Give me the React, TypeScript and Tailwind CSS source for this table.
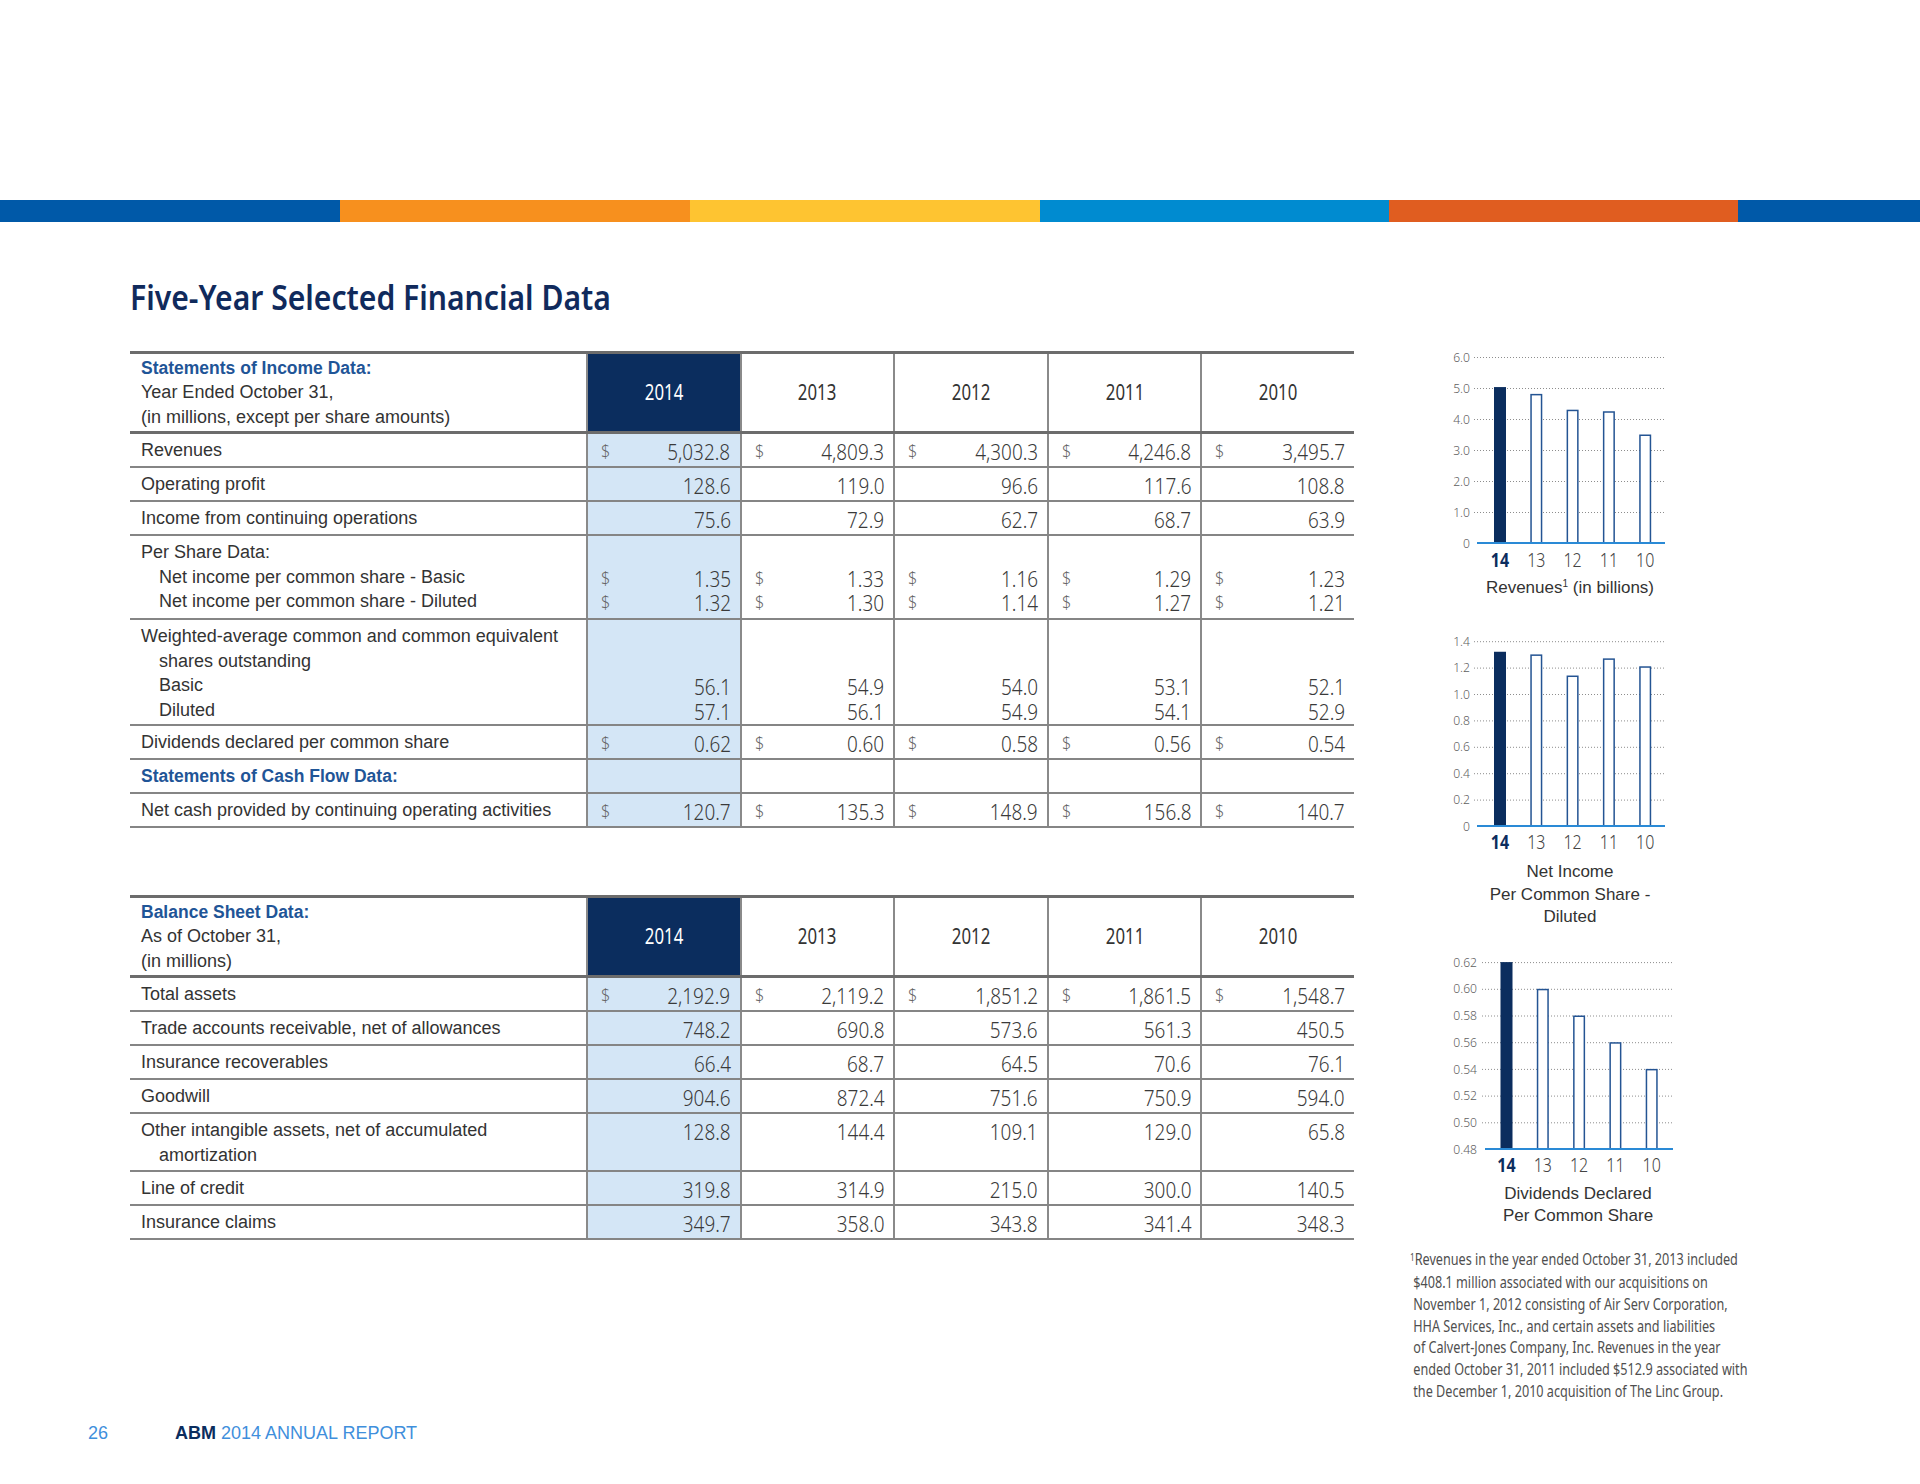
import React from "react";

const NOTO = "font-['Noto_Sans',sans-serif]";
const SANS = "font-['Liberation_Sans',Arial,sans-serif]";

type Cell = string | null;
type Line = { text: string; indent?: boolean; blue?: boolean; vals?: Cell[]; dollar?: boolean };
type Row = { h: string; lines: Line[] };

const YEARS = ["2014", "2013", "2012", "2011", "2010"];
const NBSP = "\u00a0";

const incomeRows: Row[] = [
  { h: "h-[34px]", lines: [{ text: "Revenues", dollar: true, vals: ["5,032.8", "4,809.3", "4,300.3", "4,246.8", "3,495.7"] }] },
  { h: "h-[34px]", lines: [{ text: "Operating profit", vals: ["128.6", "119.0", "96.6", "117.6", "108.8"] }] },
  { h: "h-[34px]", lines: [{ text: "Income from continuing operations", vals: ["75.6", "72.9", "62.7", "68.7", "63.9"] }] },
  {
    h: "h-[84px]",
    lines: [
      { text: "Per Share Data:" },
      { text: "Net income per common share - Basic", indent: true, dollar: true, vals: ["1.35", "1.33", "1.16", "1.29", "1.23"] },
      { text: "Net income per common share - Diluted", indent: true, dollar: true, vals: ["1.32", "1.30", "1.14", "1.27", "1.21"] },
    ],
  },
  {
    h: "h-[106px]",
    lines: [
      { text: "Weighted-average common and common equivalent" },
      { text: "shares outstanding", indent: true },
      { text: "Basic", indent: true, vals: ["56.1", "54.9", "54.0", "53.1", "52.1"] },
      { text: "Diluted", indent: true, vals: ["57.1", "56.1", "54.9", "54.1", "52.9"] },
    ],
  },
  { h: "h-[34px]", lines: [{ text: "Dividends declared per common share", dollar: true, vals: ["0.62", "0.60", "0.58", "0.56", "0.54"] }] },
  { h: "h-[34px]", lines: [{ text: "Statements of Cash Flow Data:", blue: true }] },
  { h: "h-[34px]", lines: [{ text: "Net cash provided by continuing operating activities", dollar: true, vals: ["120.7", "135.3", "148.9", "156.8", "140.7"] }] },
];

const balanceRows: Row[] = [
  { h: "h-[34px]", lines: [{ text: "Total assets", dollar: true, vals: ["2,192.9", "2,119.2", "1,851.2", "1,861.5", "1,548.7"] }] },
  { h: "h-[34px]", lines: [{ text: "Trade accounts receivable, net of allowances", vals: ["748.2", "690.8", "573.6", "561.3", "450.5"] }] },
  { h: "h-[34px]", lines: [{ text: "Insurance recoverables", vals: ["66.4", "68.7", "64.5", "70.6", "76.1"] }] },
  { h: "h-[34px]", lines: [{ text: "Goodwill", vals: ["904.6", "872.4", "751.6", "750.9", "594.0"] }] },
  {
    h: "h-[58px]",
    lines: [
      { text: "Other intangible assets, net of accumulated", vals: ["128.8", "144.4", "109.1", "129.0", "65.8"] },
      { text: "amortization", indent: true },
    ],
  },
  { h: "h-[34px]", lines: [{ text: "Line of credit", vals: ["319.8", "314.9", "215.0", "300.0", "140.5"] }] },
  { h: "h-[34px]", lines: [{ text: "Insurance claims", vals: ["349.7", "358.0", "343.8", "341.4", "348.3"] }] },
];

function HeaderRow({ lines }: { lines: string[] }) {
  return (
    <div className="grid h-[83px] grid-cols-[456px_repeat(5,minmax(0,1fr))] border-t-[3px] border-b-[3px] border-[#6c6c6c]">
      <div className="flex flex-col justify-center pl-[11px]">
        {lines.map((t, k) => (
          <div
            key={k}
            className={
              k === 0
                ? "h-[24.5px] whitespace-nowrap text-[17.5px] font-bold leading-[24.5px] text-[#1f5597]"
                : "h-[24.5px] whitespace-nowrap text-[18px] leading-[24.5px] text-[#333333]"
            }
          >
            {t}
          </div>
        ))}
      </div>
      {YEARS.map((y, i) => (
        <div
          key={y}
          className={
            i === 0
              ? `flex items-center justify-center border-l-2 border-[#8a8a8a] bg-[#0b2d5e] text-[21px] leading-none text-white ${NOTO}`
              : `flex items-center justify-center border-l-2 border-[#8a8a8a] text-[21px] leading-none text-[#333333] ${NOTO}`
          }
        >
          <span className="inline-block scale-x-[0.8]">{y}</span>
        </div>
      ))}
    </div>
  );
}

function TableRow({ row }: { row: Row }) {
  const hasDollar = row.lines.some((l) => l.dollar && l.vals);
  const hasVals = row.lines.some((l) => l.vals);
  return (
    <div className={`grid grid-cols-[456px_repeat(5,minmax(0,1fr))] border-b-2 border-[#858585] ${row.h}`}>
      <div className="pl-[11px] pt-[4px]">
        {row.lines.map((l, k) => (
          <div
            key={k}
            className={`h-[24.5px] whitespace-nowrap leading-[24.5px] ${l.indent ? "pl-[18px]" : ""} ${
              l.blue ? "text-[17.5px] font-bold text-[#1f5597]" : "text-[18px] text-[#333333]"
            }`}
          >
            {l.text}
          </div>
        ))}
      </div>
      {YEARS.map((y, i) => (
        <div
          key={y}
          className={`flex items-start justify-between border-l-2 border-[#8a8a8a] pl-[13px] pr-[9px] pt-[5px] ${NOTO} ${
            i === 0 ? "bg-[#d4e6f6]" : ""
          }`}
        >
          <div className="origin-left scale-x-[0.85] whitespace-pre text-[19px] font-light leading-[24.5px] text-[#666666]">
            {hasDollar ? row.lines.map((l) => (l.dollar && l.vals ? "$" : NBSP)).join("\n") : ""}
          </div>
          <div className="origin-right scale-x-[0.86] whitespace-pre text-right text-[22px] font-light leading-[24.5px] text-[#3a3a3a]">
            {hasVals ? row.lines.map((l) => (l.vals ? l.vals[i] ?? NBSP : NBSP)).join("\n") : ""}
          </div>
        </div>
      ))}
    </div>
  );
}

type ChartProps = {
  ticks: { v: number; label: string }[];
  yOf: (v: number) => number;
  labelX: number;
  gridX1: number;
  gridX2: number;
  baseX1: number;
  baseX2: number;
  barX0: number;
  values: number[];
  xLabelY: number;
};

function BarChart({ ticks, yOf, labelX, gridX1, gridX2, baseX1, baseX2, barX0, values, xLabelY }: ChartProps) {
  const base = yOf(ticks[0].v);
  const names = ["14", "13", "12", "11", "10"];
  return (
    <svg width="310" height="230" viewBox="0 0 310 230" className={`block ${NOTO}`}>
      {ticks.map((t, k) => (
        <g key={k}>
          <text
            transform={`translate(${labelX} ${yOf(t.v) + 4.6}) scale(0.9 1)`}
            textAnchor="end"
            fontSize="13.5"
            fontWeight={300}
            fill="#5e5e5e"
          >
            {t.label}
          </text>
          {k > 0 && (
            <line
              x1={gridX1}
              x2={gridX2}
              y1={yOf(t.v) + 0.5}
              y2={yOf(t.v) + 0.5}
              stroke="#8d8d8d"
              strokeWidth="1"
              strokeDasharray="1 2"
            />
          )}
        </g>
      ))}
      {values.map((v, i) => {
        const cx = barX0 + i * 36.3;
        const top = yOf(v);
        return i === 0 ? (
          <rect key={i} x={cx - 6} y={top} width="12" height={base - top} fill="#0b2d5e" />
        ) : (
          <rect
            key={i}
            x={cx - 5.25}
            y={top + 0.75}
            width="10.5"
            height={base - top - 0.75}
            fill="#ffffff"
            stroke="#245493"
            strokeWidth="1.5"
          />
        );
      })}
      <line x1={baseX1} x2={baseX2} y1={base} y2={base} stroke="#2a8ad6" strokeWidth="2" />
      {names.map((n, i) => (
        <text
          key={n}
          transform={`translate(${barX0 + i * 36.3} ${xLabelY + 7}) scale(0.8 1)`}
          textAnchor="middle"
          fontSize="20"
          fontWeight={i === 0 ? 700 : 300}
          fill={i === 0 ? "#0b2d5e" : "#444444"}
        >
          {n}
        </text>
      ))}
    </svg>
  );
}

export default function App() {
  const revTicks = [0, 1, 2, 3, 4, 5, 6].map((v) => ({ v, label: v === 0 ? "0" : v.toFixed(1) }));
  const niTicks = [0, 0.2, 0.4, 0.6, 0.8, 1.0, 1.2, 1.4].map((v) => ({ v, label: v === 0 ? "0" : v.toFixed(1) }));
  const divTicks = [0.48, 0.5, 0.52, 0.54, 0.56, 0.58, 0.6, 0.62].map((v) => ({ v, label: v.toFixed(2) }));

  return (
    <div className={`h-[1484px] w-[1920px] overflow-hidden bg-white ${SANS}`}>
      <div className="h-[200px]" />
      <div className="flex h-[22px]">
        <div className="w-[340px] bg-[#0059a8]" />
        <div className="w-[350px] bg-[#f7901e]" />
        <div className="w-[350px] bg-[#fec431]" />
        <div className="w-[349px] bg-[#008bd0]" />
        <div className="w-[349px] bg-[#e05d20]" />
        <div className="flex-1 bg-[#0059a8]" />
      </div>

      <div className="flex h-[1199px]">
        <div className="ml-[130px] w-[1224px] pt-[55px]">
          <h1
            className={`h-[40px] origin-left scale-x-[0.86] whitespace-nowrap text-[35px] font-semibold leading-[40px] text-[#102a5c] ${NOTO}`}
          >
            Five-Year Selected Financial Data
          </h1>

          <div className="mt-[34px]">
            <HeaderRow lines={["Statements of Income Data:", "Year Ended October 31,", "(in millions, except per share amounts)"]} />
            {incomeRows.map((r, k) => (
              <TableRow key={k} row={r} />
            ))}
          </div>

          <div className="mt-[67px]">
            <HeaderRow lines={["Balance Sheet Data:", "As of October 31,", "(in millions)"]} />
            {balanceRows.map((r, k) => (
              <TableRow key={k} row={r} />
            ))}
          </div>
        </div>

        <div className="ml-[56px] w-[310px] pt-[123px]">
          <BarChart
            ticks={revTicks}
            yOf={(v) => 198 - v * 31}
            labelX={60}
            gridX1={64}
            gridX2={256}
            baseX1={67}
            baseX2={255}
            barX0={90}
            values={[5.03, 4.81, 4.3, 4.25, 3.5]}
            xLabelY={215}
          />
          <div className="mt-[2px] w-[320px] text-center text-[17px] leading-[22px] text-[#333333]">
            Revenues<span className="relative -top-[6px] text-[10px]">1</span> (in billions)
          </div>

          <div className="mt-[26px]">
            <BarChart
              ticks={niTicks}
              yOf={(v) => 199 - v * 132}
              labelX={60}
              gridX1={64}
              gridX2={256}
              baseX1={67}
              baseX2={255}
              barX0={90}
              values={[1.32, 1.3, 1.14, 1.27, 1.21]}
              xLabelY={215}
            />
          </div>
          <div className="mt-[4px] w-[320px] text-center text-[17px] leading-[22.5px] text-[#333333]">
            <div>Net Income</div>
            <div>Per Common Share -</div>
            <div>Diluted</div>
          </div>

          <div className="mt-[19px]">
            <BarChart
              ticks={divTicks}
              yOf={(v) => 201 - (v - 0.48) * 1335}
              labelX={67}
              gridX1={72}
              gridX2={263}
              baseX1={75}
              baseX2={263}
              barX0={96.5}
              values={[0.62, 0.6, 0.58, 0.56, 0.54]}
              xLabelY={217}
            />
          </div>
          <div className="mt-[5px] w-[336px] text-center text-[17px] leading-[22.5px] text-[#333333]">
            <div>Dividends Declared</div>
            <div>Per Common Share</div>
          </div>

          <div className={`mt-[21px] origin-left scale-x-[0.815] text-[15.5px] leading-[21.7px] text-[#4f4f4f] ${NOTO}`}>
            <div className="whitespace-nowrap">
              <span className="relative -top-[4px] text-[10px]">1</span>Revenues in the year ended October 31, 2013 included
            </div>
            <div className="whitespace-nowrap pl-[4px]">$408.1 million associated with our acquisitions on</div>
            <div className="whitespace-nowrap pl-[4px]">November 1, 2012 consisting of Air Serv Corporation,</div>
            <div className="whitespace-nowrap pl-[4px]">HHA Services, Inc., and certain assets and liabilities</div>
            <div className="whitespace-nowrap pl-[4px]">of Calvert-Jones Company, Inc. Revenues in the year</div>
            <div className="whitespace-nowrap pl-[4px]">ended October 31, 2011 included $512.9 associated with</div>
            <div className="whitespace-nowrap pl-[4px]">the December 1, 2010 acquisition of The Linc Group.</div>
          </div>
        </div>
      </div>

      <div className="flex h-[24px] items-center pl-[88px] text-[18px] leading-[24px]">
        <span className="w-[87px] text-[#3f8fdc]">26</span>
        <span className="font-bold text-[#0b2d5e]">ABM</span>
        <span className="ml-[5px] text-[#3f8fdc]">2014 ANNUAL REPORT</span>
      </div>
    </div>
  );
}
